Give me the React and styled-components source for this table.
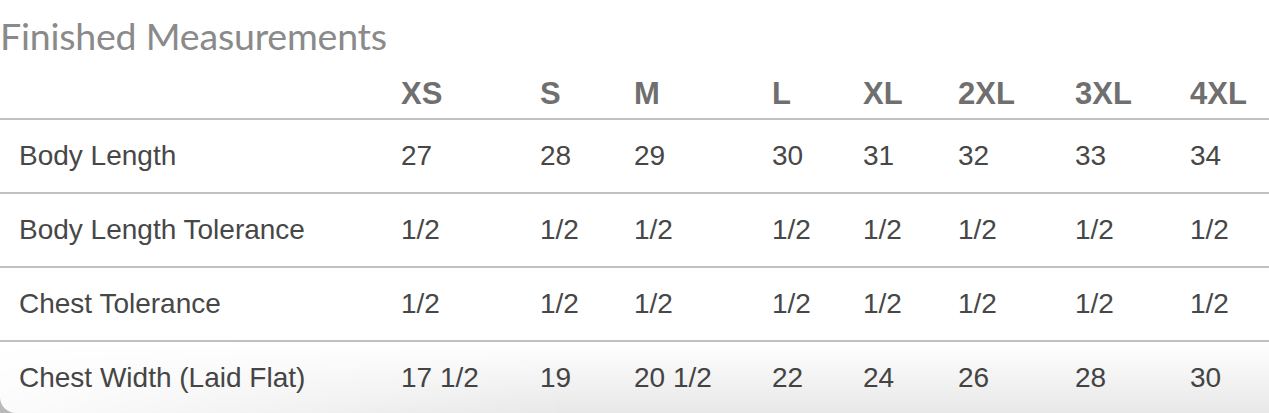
import styled, { createGlobalStyle } from "styled-components";

const GlobalStyle = createGlobalStyle`
  html, body {
    margin: 0;
    padding: 0;
    background: #b9b9b9;
  }
  body {
    font-family: "Liberation Sans", Arial, sans-serif;
  }
`;

const Card = styled.div`
  position: relative;
  width: 1269px;
  height: 413px;
  overflow: hidden;
  background: #ffffff;
  border-bottom-left-radius: 16px;

  &::after {
    content: "";
    position: absolute;
    left: 0;
    right: 0;
    bottom: 0;
    height: 72px;
    pointer-events: none;
    background: linear-gradient(to bottom, rgba(0, 0, 0, 0), rgba(0, 0, 0, 0.09));
    -webkit-mask-image: linear-gradient(to right, rgba(0, 0, 0, 0.15), #000 45%);
    mask-image: linear-gradient(to right, rgba(0, 0, 0, 0.15), #000 45%);
  }
`;

const Title = styled.h2`
  margin: 0;
  padding-top: 14px;
  font-family: Lato, "Open Sans", sans-serif;
  font-weight: 400;
  font-size: 37.5px;
  line-height: 44px;
  color: #8a8a8a;
  letter-spacing: -0.2px;
`;

const Table = styled.table`
  width: 100%;
  table-layout: fixed;
  border-collapse: collapse;
`;

const HeadCell = styled.th`
  height: 51px;
  padding: 0 0 9px 19px;
  vertical-align: bottom;
  text-align: left;
  font-size: 31px;
  font-weight: 700;
  line-height: 1;
  color: #6f6f6f;
`;

const Row = styled.tr`
  border-top: 2px solid #c0c0c0;
`;

const Cell = styled.td`
  height: 72px;
  padding: 0 0 0 19px;
  vertical-align: middle;
  text-align: left;
  font-size: 28px;
  line-height: 1;
  color: #474747;
  white-space: nowrap;
`;

const sizes = ["XS", "S", "M", "L", "XL", "2XL", "3XL", "4XL"];
const widths = [382, 139, 94, 138, 91, 95, 117, 115, 98];

const rows = [
  ["Body Length", "27", "28", "29", "30", "31", "32", "33", "34"],
  ["Body Length Tolerance", "1/2", "1/2", "1/2", "1/2", "1/2", "1/2", "1/2", "1/2"],
  ["Chest Tolerance", "1/2", "1/2", "1/2", "1/2", "1/2", "1/2", "1/2", "1/2"],
  ["Chest Width (Laid Flat)", "17 1/2", "19", "20 1/2", "22", "24", "26", "28", "30"],
];

export default function App() {
  return (
    <>
      <GlobalStyle />
      <Card>
        <Title>Finished Measurements</Title>
        <Table>
          <colgroup>
            {widths.map((w, i) => (
              <col key={i} style={{ width: w }} />
            ))}
          </colgroup>
          <thead>
            <tr>
              <HeadCell />
              {sizes.map((s) => (
                <HeadCell key={s}>{s}</HeadCell>
              ))}
            </tr>
          </thead>
          <tbody>
            {rows.map((r) => (
              <Row key={r[0]}>
                {r.map((v, i) => (
                  <Cell key={i}>{v}</Cell>
                ))}
              </Row>
            ))}
          </tbody>
        </Table>
      </Card>
    </>
  );
}
